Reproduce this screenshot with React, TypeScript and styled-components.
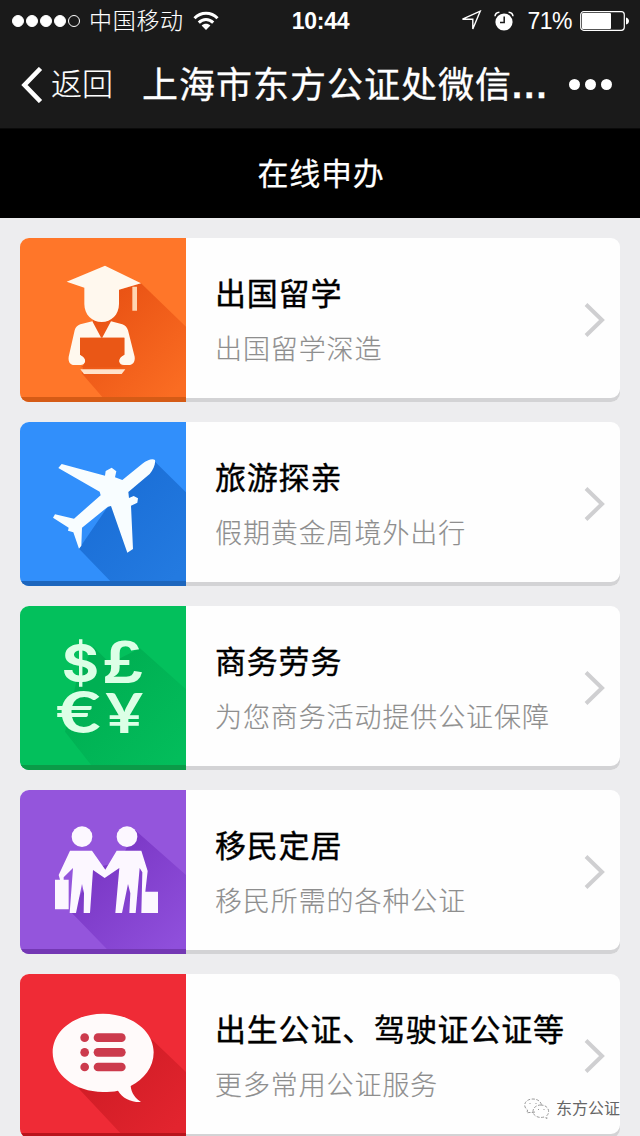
import React from "react";
import styled, { createGlobalStyle } from "styled-components";

const GlobalStyle = createGlobalStyle`
  * { box-sizing: border-box; }
  html, body { margin: 0; padding: 0; background: #ededef; }
  body {
    width: 640px;
    height: 1136px;
    overflow: hidden;
    font-family: "Liberation Sans", "Noto Sans CJK SC", sans-serif;
  }
`;

const Screen = styled.div`
  width: 640px;
  height: 1136px;
  overflow: hidden;
  position: relative;
  background: #ededef;
`;

const TopBar = styled.header`
  height: 129px;
  background: #1a1a1a;
  border-bottom: 1px solid #0a0a0a;
  color: #fff;
`;

const StatusBar = styled.div`
  display: grid;
  grid-template-columns: 1fr auto 1fr;
  align-items: center;
  height: 41px;
  padding: 0 11px 0 12px;
`;

const StatusSide = styled.div<{ $end?: boolean }>`
  display: flex;
  align-items: center;
  justify-content: ${(p) => (p.$end ? "flex-end" : "flex-start")};
`;

const Signal = styled.div`
  display: flex;
  gap: 2px;
  margin-right: 9px;
`;

const Dot = styled.i<{ $filled: boolean }>`
  width: 12px;
  height: 12px;
  border-radius: 50%;
  border: 1px solid #fff;
  background: ${(p) => (p.$filled ? "#fff" : "transparent")};
`;

const Carrier = styled.span`
  font-size: 23px;
  line-height: 40px;
  letter-spacing: 0.7px;
  font-weight: 300;
  margin-right: 9px;
  padding-top: 1px;
  -webkit-text-stroke: 0.1px #fff;
`;

const Clock = styled.span`
  font-size: 23px;
  font-weight: 700;
  letter-spacing: -0.3px;
  padding-top: 1px;
`;

const Percent = styled.span`
  font-size: 23px;
  margin: 0 8px 0 13px;
  padding-top: 1px;
  letter-spacing: -0.5px;
`;

const NavBar = styled.div`
  display: flex;
  align-items: center;
  height: 87px;
  padding-left: 21px;
`;

const BackLabel = styled.span`
  width: 98px;
  padding-left: 8px;
  font-size: 31px;
  line-height: 87px;
  font-weight: 300;
  -webkit-text-stroke: 0.15px #fff;
`;

const NavTitle = styled.h1`
  margin: 0;
  padding: 2px 0 0 1px;
  width: 428px;
  font-size: 36px;
  line-height: 87px;
  letter-spacing: 1px;
  font-weight: 400;
  white-space: nowrap;
  -webkit-text-stroke: 0.3px #fff;
`;

const Ellipsis = styled.span`
  font-weight: 700;
  letter-spacing: 2.2px;
`;

const More = styled.div`
  display: flex;
  gap: 5px;
`;

const MoreDot = styled.i`
  width: 11px;
  height: 11px;
  border-radius: 50%;
  background: #fff;
`;

const SectionBar = styled.div`
  height: 89px;
  padding-left: 2px;
  background: #000;
  color: #fff;
  font-size: 31px;
  line-height: 91px;
  letter-spacing: 0.7px;
  text-align: center;
  -webkit-text-stroke: 0.25px #fff;
`;

const List = styled.main`
  display: flex;
  flex-direction: column;
  gap: 20px;
  padding: 20px;
`;

const Card = styled.article`
  display: flex;
  flex: none;
  height: 164px;
  border-radius: 9px;
  overflow: hidden;
  background: #fefefe;
  box-shadow: inset 0 -4px 0 #d3d3d5;
`;

const Tile = styled.div<{ $color: string; $edge: string }>`
  width: 166px;
  height: 164px;
  background: ${(p) => p.$color};
  position: relative;
  &::after {
    content: "";
    position: absolute;
    inset: auto 0 0 0;
    height: 5px;
    background: ${(p) => p.$edge};
  }
  svg { display: block; }
`;

const CardText = styled.div`
  flex: 1;
  padding: 34px 0 0 29px;
  white-space: nowrap;
`;

const CardTitle = styled.h2`
  margin: 0;
  font-size: 31px;
  line-height: 46px;
  letter-spacing: 0.8px;
  font-weight: 400;
  color: #000;
  -webkit-text-stroke: 0.4px #000;
`;

const CardNote = styled.p`
  margin: 11px 0 0;
  font-size: 27px;
  line-height: 42px;
  letter-spacing: 0.9px;
  font-weight: 300;
  color: #8e8e8e;
  -webkit-text-stroke: 0.15px #8e8e8e;
`;

const Arrow = styled.svg`
  align-self: center;
  margin-right: 14px;
`;

const Watermark = styled.div`
  position: absolute;
  left: 523px;
  top: 1097px;
  display: flex;
  align-items: center;
  gap: 6px;
  font-size: 16px;
  line-height: 24px;
  color: #666;
  text-shadow: -1px -1px 0 #fff;
`;

type ShadeProps = { id: string; from: string; to: string; d: string };

/* Long diagonal shadow that fades toward the lower right corner of a tile. */
const Shade = ({ id, from, to, d }: ShadeProps) => (
  <>
    <defs>
      <linearGradient id={id} gradientUnits="userSpaceOnUse" x1="270" y1="250" x2="500" y2="480">
        <stop offset="0" stopColor={from} />
        <stop offset="1" stopColor={to} />
      </linearGradient>
    </defs>
    <path d={d} fill={`url(#${id})`} />
  </>
);

const StudentArt = () => (
  <svg width="166" height="164" viewBox="30 24 498 492">
    <Shade id="shadeOrange" from="#ea5415" to="#fa6c22" d="M393 160L528 290V516H290L215 430L250 270L325 180Z" />
    <g fill="#fff8ee">
      <path d="M170 155L285 107L393 160L327 179V222C327 254 304 276 275 276C246 276 223 254 223 222V173Z" />
      <path d="M367 170H381V242H367Z" fill="#ffd5b0" />
      <path d="M247 274L275 326L303 274L337 283C346 286 351 292 354 301L374 380C376 396 368 405 356 405H342C325 405 322 384 336 377L343 374V323H210V374L218 377C231 384 228 405 211 405H193C181 405 174 396 176 380L194 301C197 291 202 286 211 283Z" />
      <path d="M211 418H346L335 432H222Z" fill="#ffe3cb" />
    </g>
    <path d="M210 323H343V374C322 384 322 405 342 412H211C231 405 231 384 210 374Z" fill="#ea5716" />
  </svg>
);

const PlaneArt = () => (
  <svg width="166" height="164" viewBox="30 21 498 492">
    <Shade id="shadeBlue" from="#1b6fd7" to="#237ae0" d="M435 140L528 232V513H315L207 401L290 280L350 231Z" />
    <path
      fill="#f8fdff"
      d="M435 135C437 148 430 164 419 177L355 231L357 249L371 243L384 250L382 263L363 272L369 402L352 413L303 273L294 275L216 338L214 392L207 401L190 352L174 347L176 338L129 308L135 298L192 311L272 241L269 230L145 159L155 147L285 182L287 168L305 158L319 169L315 187L337 195L397 146C412 135 427 130 435 135Z"
    />
  </svg>
);

const CurrencyText = styled.text<{ $face: string }>`
  font-family: ${(p) => p.$face}, sans-serif;
  font-weight: 700;
  fill: #dcffe6;
`;

const CurrencyArt = () => (
  <svg width="166" height="164" viewBox="30 18 498 492">
    <Shade id="shadeGreen" from="#00b053" to="#03bd5b" d="M250 140L300 190L390 145L528 268V510H255L165 395L200 240Z" />
    <CurrencyText $face="Inter" x="155" y="246" fontSize="158" textLength="112" lengthAdjust="spacingAndGlyphs">$</CurrencyText>
    <CurrencyText $face="'Liberation Sans'" x="282" y="250" fontSize="186" textLength="116" lengthAdjust="spacingAndGlyphs">£</CurrencyText>
    <CurrencyText $face="Lato" x="139" y="398" fontSize="170" textLength="134" lengthAdjust="spacingAndGlyphs">€</CurrencyText>
    <CurrencyText $face="Lato" x="286" y="400" fontSize="168" textLength="114" lengthAdjust="spacingAndGlyphs">¥</CurrencyText>
  </svg>
);

const TravellersArt = () => (
  <svg width="166" height="164" viewBox="30 15 498 492">
    <Shade id="shadePurple" from="#7c39c7" to="#8f4fdb" d="M375 135L528 270V507H305L185 383L250 250L330 230Z" />
    <g fill="#fcf7ff">
      <circle cx="216" cy="155" r="31" />
      <circle cx="351" cy="155" r="31" />
      <path d="M180 197H246L286 254L320 197H394L413 258L406 320H444V384H394L397 262L389 249L377 384H358L361 325L354 297L336 384H316L328 249L284 279L249 255L240 384H221L222 325L216 297L198 384H179L189 249L161 277V284H176V373H135V284H150L146 270Z" />
    </g>
  </svg>
);

const ListBubbleArt = () => (
  <svg width="166" height="164" viewBox="30 24 498 492">
    <Shade id="shadeRed" from="#cf1c25" to="#e2242e" d="M425 220L528 318V516H345L205 367L330 290Z" />
    <path
      fill="#fffafa"
      d="M279 143C363 143 431 194 431 259C431 304 402 340 362 360C364 381 376 397 393 408C361 409 337 396 324 374C310 377 295 378 279 378C195 378 128 325 128 259C128 194 195 143 279 143Z"
    />
    <g fill="#cc3a4c">
      {[215, 259, 303].map((y) => (
        <React.Fragment key={y}>
          <circle cx="224" cy={y} r="13" />
          <rect x="251" y={y - 13} width="96" height="26" rx="13" />
        </React.Fragment>
      ))}
    </g>
  </svg>
);

const services = [
  { title: "出国留学", note: "出国留学深造", color: "#ff7629", edge: "#d55b16", Art: StudentArt },
  { title: "旅游探亲", note: "假期黄金周境外出行", color: "#318ffb", edge: "#1d66bd", Art: PlaneArt },
  { title: "商务劳务", note: "为您商务活动提供公证保障", color: "#03c05c", edge: "#0b9b48", Art: CurrencyArt },
  { title: "移民定居", note: "移民所需的各种公证", color: "#9455dc", edge: "#7438b4", Art: TravellersArt },
  { title: "出生公证、驾驶证公证等", note: "更多常用公证服务", color: "#ef2b36", edge: "#b9141c", Art: ListBubbleArt },
];

export default function App() {
  return (
    <Screen>
      <GlobalStyle />
      <TopBar>
        <StatusBar>
          <StatusSide>
            <Signal>
              {[1, 2, 3, 4, 5].map((n) => (
                <Dot key={n} $filled={n < 5} />
              ))}
            </Signal>
            <Carrier>中国移动</Carrier>
            <svg width="26" height="20" viewBox="0 0 26 20">
              <g fill="none" stroke="#fff" strokeWidth="3">
                <path d="M1.5 7.2C8 0.6 18 0.6 24.5 7.2" />
                <path d="M5.8 11.6C10 7.4 16 7.4 20.2 11.6" />
              </g>
              <path d="M8.6 14.6C11 12.2 15 12.2 17.4 14.6L13 19Z" fill="#fff" />
            </svg>
          </StatusSide>
          <Clock>10:44</Clock>
          <StatusSide $end>
            <svg width="21" height="21" viewBox="0 0 21 21">
              <path d="M1.5 9.2L19.2 1.2L11.8 19V9.2Z" fill="none" stroke="#fff" strokeWidth="1.4" />
            </svg>
            <svg width="20" height="20" viewBox="0 0 20 20" style={{ marginLeft: 12 }}>
              <circle cx="10" cy="11" r="8.6" fill="#fff" />
              <path d="M10.2 5.5V11.5H6" fill="none" stroke="#1a1a1a" strokeWidth="1.5" />
              <path d="M1 5.2C1.2 3 3 1.4 5.4 1.2M19 5.2C18.8 3 17 1.4 14.6 1.2" fill="none" stroke="#fff" strokeWidth="1.5" />
            </svg>
            <Percent>71%</Percent>
            <svg width="49" height="20" viewBox="0 0 49 20">
              <rect x="0.7" y="0.7" width="43.6" height="18.6" rx="3" fill="none" stroke="#fff" strokeWidth="1.2" />
              <rect x="2" y="2" width="29" height="16" rx="1" fill="#fff" />
              <path d="M46 6.5C50 7.5 50 12.5 46 13.5Z" fill="#fff" />
            </svg>
          </StatusSide>
        </StatusBar>
        <NavBar>
          <svg width="22" height="36" viewBox="0 0 22 36">
            <path d="M19.5 1.5L3.5 18L19.5 34.5" fill="none" stroke="#fff" strokeWidth="4.6" />
          </svg>
          <BackLabel>返回</BackLabel>
          <NavTitle>
            上海市东方公证处微信<Ellipsis>...</Ellipsis>
          </NavTitle>
          <More>
            <MoreDot />
            <MoreDot />
            <MoreDot />
          </More>
        </NavBar>
      </TopBar>
      <SectionBar>在线申办</SectionBar>
      <List>
        {services.map(({ title, note, color, edge, Art }) => (
          <Card key={title}>
            <Tile $color={color} $edge={edge}>
              <Art />
            </Tile>
            <CardText>
              <CardTitle>{title}</CardTitle>
              <CardNote>{note}</CardNote>
            </CardText>
            <Arrow width="22" height="34" viewBox="0 0 22 34">
              <path d="M2 1.5L18 17L2 32.5" fill="none" stroke="#cfcfd1" strokeWidth="4" />
            </Arrow>
          </Card>
        ))}
      </List>
      <Watermark>
        <svg width="27" height="22" viewBox="0 0 27 22" fill="none" stroke="#999" strokeWidth="1" strokeDasharray="3 1.5">
          <path d="M12 14C8 15 6 14 4 15L4.500 12C-1 8 2 1 10 1C15 1 18 4 18.500 7" />
          <path d="M18 7C13 7 10 10 10 13.500C10 18 16 20.500 21 19L24 20.500L23.500 18C28 14 25 7 18 7Z" />
          <path d="M7 5V6M13 5V6M15.500 11V12M21 11V12" />
        </svg>
        东方公证
      </Watermark>
    </Screen>
  );
}
